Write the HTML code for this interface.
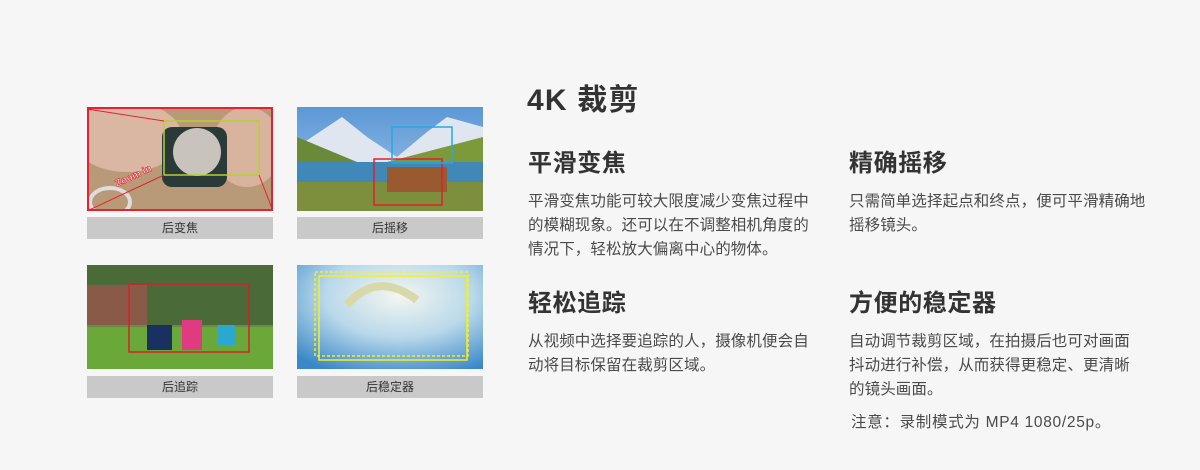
<!DOCTYPE html>
<html><head><meta charset="utf-8"><style>
*{margin:0;padding:0;box-sizing:border-box}
body{width:1200px;height:470px;background:#f6f6f6;font-family:"Liberation Sans","Noto Sans CJK SC",sans-serif;position:relative;overflow:hidden;color:#333}
.img{position:absolute;width:186px;height:104px;overflow:hidden}
.cap{position:absolute;width:186px;height:22px;background:#c9c9c9;color:#333;font-size:12px;line-height:22px;text-align:center}
h1{position:absolute;left:527px;top:75px;font-size:30px;font-weight:bold;color:#333;white-space:nowrap;letter-spacing:1.2px}
h2{position:absolute;font-size:24px;font-weight:bold;color:#333;white-space:nowrap;letter-spacing:0.6px}
p{position:absolute;font-size:15.5px;line-height:24px;color:#4a4a4a;letter-spacing:0.1px;white-space:nowrap}
</style></head><body>
<div class="img" style="left:87px;top:107px"><svg width="186" height="104">
<rect width="186" height="104" fill="#b99a78"/>
<ellipse cx="40" cy="30" rx="55" ry="35" fill="#d9b7a2"/>
<ellipse cx="160" cy="40" rx="35" ry="40" fill="#d8b39e"/>
<rect x="75" y="20" width="65" height="60" rx="10" fill="#2a3a38"/>
<circle cx="110" cy="45" r="24" fill="#c8c3bc"/>
<ellipse cx="23" cy="95" rx="20" ry="14" fill="none" stroke="#ddd" stroke-width="4"/>
<rect x="1" y="1" width="184" height="102" fill="none" stroke="#e8202f" stroke-width="2"/>
<rect x="77" y="14" width="95" height="54" fill="none" stroke="#b6d030" stroke-width="1.5"/>
<line x1="0" y1="2" x2="77" y2="14" stroke="#e8202f"/><line x1="0" y1="104" x2="77" y2="68" stroke="#e8202f"/><line x1="186" y1="104" x2="172" y2="68" stroke="#e8202f"/>
<text x="30" y="80" transform="rotate(-25 30 80)" font-size="10" font-weight="bold" fill="#fff" stroke="#e8202f" stroke-width="0.6">Zoom in</text>
</svg></div>
<div class="cap" style="left:87px;top:217px">后变焦</div>
<div class="img" style="left:297px;top:107px"><svg width="186" height="104">
<defs><linearGradient id="sk" x1="0" y1="0" x2="0" y2="1"><stop offset="0" stop-color="#5b98d6"/><stop offset="1" stop-color="#a8c8e8"/></linearGradient></defs>
<rect width="186" height="104" fill="url(#sk)"/>
<polygon points="0,40 30,20 45,10 70,30 100,50 130,25 150,10 186,20 186,60 0,60" fill="#dfe6f0"/>
<polygon points="0,30 60,55 0,60" fill="#6a8a3a"/>
<polygon points="90,55 186,30 186,80 90,80" fill="#7c9a3a"/>
<rect x="0" y="55" width="186" height="25" fill="#3f88b8"/>
<rect x="0" y="75" width="186" height="29" fill="#7d8f3c"/>
<rect x="90" y="60" width="60" height="25" fill="#9a5a30"/>
<rect x="77" y="52" width="68" height="46" fill="none" stroke="#e02030" stroke-width="1.5"/>
<rect x="95" y="20" width="60" height="36" fill="none" stroke="#28a8e0" stroke-width="1.5"/>
</svg></div>
<div class="cap" style="left:297px;top:217px">后摇移</div>
<div class="img" style="left:87px;top:265px"><svg width="186" height="104">
<rect width="186" height="104" fill="#6a8a48"/>
<rect y="0" width="186" height="60" fill="#4a6a38"/>
<rect y="20" width="60" height="40" fill="#8a5a48"/>
<rect y="62" width="186" height="42" fill="#6aa83a"/>
<rect x="60" y="60" width="25" height="25" fill="#1a3060"/>
<rect x="95" y="55" width="20" height="30" fill="#e03a80"/>
<rect x="130" y="60" width="18" height="20" fill="#2aa8d0"/>
<rect x="42" y="19" width="120" height="68" fill="none" stroke="#d82028" stroke-width="1.5"/>
</svg></div>
<div class="cap" style="left:87px;top:376px">后追踪</div>
<div class="img" style="left:297px;top:265px"><svg width="186" height="104">
<defs><radialGradient id="cl" cx="0.55" cy="0.3" r="0.8"><stop offset="0" stop-color="#f4f6f0"/><stop offset="0.5" stop-color="#b8d8ea"/><stop offset="1" stop-color="#3a88c8"/></radialGradient></defs>
<rect width="186" height="104" fill="url(#cl)"/>
<path d="M50,40 Q80,5 120,35" fill="none" stroke="#d8d8a8" stroke-width="8"/>
<rect x="18" y="7" width="153" height="84" fill="none" stroke="#f5f020" stroke-width="1.5" stroke-dasharray="3,2"/>
<rect x="22" y="11" width="148" height="84" fill="none" stroke="#f5f020" stroke-width="1.5"/>
</svg></div>
<div class="cap" style="left:297px;top:376px">后稳定器</div>

<h1>4K 裁剪</h1>
<h2 style="left:528px;top:143px">平滑变焦</h2>
<p style="left:528px;top:190px">平滑变焦功能可较大限度减少变焦过程中<br>的模糊现象。还可以在不调整相机角度的<br>情况下，轻松放大偏离中心的物体。</p>
<h2 style="left:849px;top:143px">精确摇移</h2>
<p style="left:849px;top:190px">只需简单选择起点和终点，便可平滑精确地<br>摇移镜头。</p>
<h2 style="left:528px;top:283px">轻松追踪</h2>
<p style="left:528px;top:330px">从视频中选择要追踪的人，摄像机便会自<br>动将目标保留在裁剪区域。</p>
<h2 style="left:849px;top:283px">方便的稳定器</h2>
<p style="left:849px;top:330px">自动调节裁剪区域，在拍摄后也可对画面<br>抖动进行补偿，从而获得更稳定、更清晰<br>的镜头画面。</p>
<p style="left:851px;top:411px;letter-spacing:0.7px">注意：录制模式为 MP4 1080/25p。</p>
</body></html>
